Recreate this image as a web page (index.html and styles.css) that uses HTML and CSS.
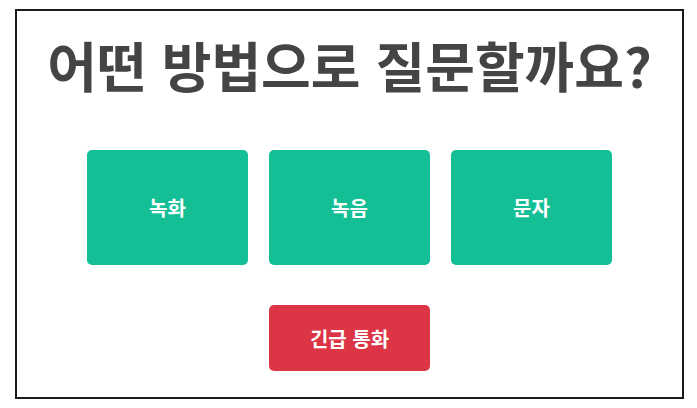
FILE: index.html
```html
<!DOCTYPE html>
<html lang="ko">
<head>
<meta charset="utf-8">
<link rel="stylesheet" href="styles.css">
</head>
<body>
<div class="frame">
  <h1 class="title">어떤 방법으로 질문할까요?</h1>
  <div class="options">
    <button class="btn btn-green">녹화</button>
    <button class="btn btn-green">녹음</button>
    <button class="btn btn-green">문자</button>
  </div>
  <div class="emergency">
    <button class="btn btn-red">긴급 통화</button>
  </div>
</div>
</body>
</html>
```

FILE: styles.css
```css
html, body {
  margin: 0;
  padding: 0;
  background: #ffffff;
}
body {
  padding: 9px 13px 9px 15px;
  font-family: "Noto Sans CJK KR", "Noto Sans", sans-serif;
}
.frame {
  box-sizing: border-box;
  width: 669px;
  height: 390px;
  border: 2px solid #1a1a1a;
  display: flex;
  flex-direction: column;
  align-items: center;
}
.title {
  margin: 19px 0 0 0;
  font-size: 54px;
  font-weight: 700;
  line-height: 70px;
  color: #444444;
  letter-spacing: 0;
}
.options {
  display: flex;
  gap: 21px;
  margin-top: 50px;
}
.btn {
  border: none;
  border-radius: 5px;
  color: #ffffff;
  font-family: "Noto Sans CJK KR", "Noto Sans", sans-serif;
  font-weight: 700;
  font-size: 20px;
  padding: 0;
  cursor: pointer;
}
.btn-green {
  width: 161px;
  height: 115px;
  background: #14bf96;
}
.emergency {
  margin-top: 40px;
}
.btn-red {
  width: 161px;
  height: 66px;
  background: #dc3545;
  font-size: 20px;
}
```
